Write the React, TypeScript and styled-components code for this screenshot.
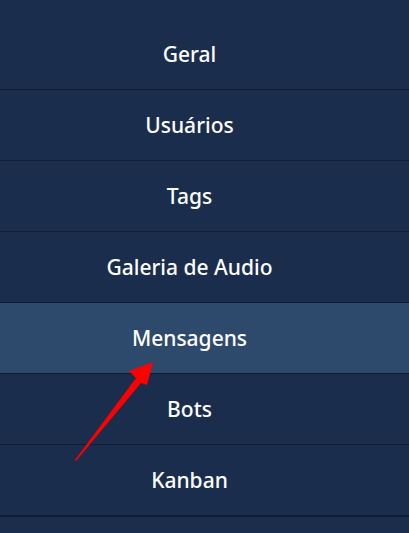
import styled, { createGlobalStyle } from 'styled-components';

const GlobalStyle = createGlobalStyle`
  * {
    box-sizing: border-box;
    margin: 0;
    padding: 0;
  }
  html, body {
    background-color: #1a2d4d;
    font-family: 'Noto Sans', 'Open Sans', sans-serif;
  }
  ul {
    list-style: none;
  }
`;

const Menu = styled.nav`
  position: relative;
  width: 409px;
  min-height: 533px;
  padding-top: 19px;
  background-color: #1a2d4d;
`;

const List = styled.ul`
  display: flex;
  flex-direction: column;
`;

const Item = styled.li<{ $active?: boolean; $last?: boolean }>`
  height: ${({ $last }) => ($last ? '72px' : '71px')};
  display: flex;
  align-items: center;
  justify-content: center;
  padding-right: 30px;
  color: #fff;
  font-size: 21px;
  font-weight: 500;
  background-color: ${({ $active }) => ($active ? '#2d4a6d' : '#1a2d4d')};
  border-bottom: ${({ $last }) => ($last ? '2px' : '1px')} solid #0f1e36;
`;

const Arrow = styled.svg`
  position: absolute;
  left: 0;
  top: 0;
  pointer-events: none;
`;

const items = ['Geral', 'Usuários', 'Tags', 'Galeria de Audio', 'Mensagens', 'Bots', 'Kanban'];

const App = () => {
  return (
    <>
      <GlobalStyle />
      <Menu>
        <List>
          {items.map((label, i) => (
            <Item key={label} $active={label === 'Mensagens'} $last={i === items.length - 1}>
              {label}
            </Item>
          ))}
        </List>
        <Arrow width="409" height="533" viewBox="0 0 409 533">
          <polygon
            points="75,460 136,378 129,371 153,362 147,385 141,383 76,461"
            fill="#ff0000"
          />
        </Arrow>
      </Menu>
    </>
  );
};

export default App;
